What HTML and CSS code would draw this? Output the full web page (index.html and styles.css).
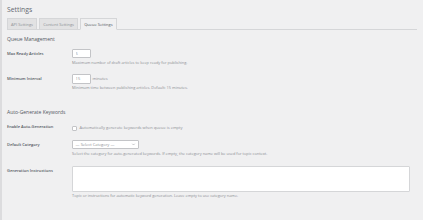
FILE: index.html
```html
<!DOCTYPE html>
<html>
<head>
<meta charset="utf-8">
<link rel="stylesheet" href="styles.css">
</head>
<body>
<div class="admin">
  <div class="wrap">
    <h1 class="title">Settings</h1>
    <nav class="tabs">
      <a class="tab">API Settings</a>
      <a class="tab">Content Settings</a>
      <a class="tab active">Queue Settings</a>
    </nav>

    <h2 class="section">Queue Management</h2>
    <div class="form">
      <div class="row">
        <div class="label">Max Ready Articles</div>
        <div class="field">
          <input class="num" type="text" value="5">
          <p class="desc">Maximum number of draft articles to keep ready for publishing.</p>
        </div>
      </div>
      <div class="row">
        <div class="label">Minimum Interval</div>
        <div class="field">
          <div class="inline"><input class="num" type="text" value="15"><span class="unit">minutes</span></div>
          <p class="desc">Minimum time between publishing articles. Default: 15 minutes.</p>
        </div>
      </div>
    </div>

    <h2 class="section gap">Auto-Generate Keywords</h2>
    <div class="form">
      <div class="row">
        <div class="label">Enable Auto-Generation</div>
        <div class="field">
          <label class="check"><span class="box"></span>Automatically generate keywords when queue is empty</label>
        </div>
      </div>
      <div class="row">
        <div class="label">Default Category</div>
        <div class="field">
          <div class="select"><span>— Select Category —</span><svg class="chev" viewBox="0 0 20 20"><path d="M5 7l5 5 5-5" fill="none" stroke="#8c8f94" stroke-width="2"/></svg></div>
          <p class="desc loose">Select the category for auto-generated keywords. If empty, the category name will be used for topic context.</p>
        </div>
      </div>
      <div class="row">
        <div class="label">Generation Instructions</div>
        <div class="field">
          <div class="textarea"></div>
          <p class="desc">Topic or instructions for automatic keyword generation. Leave empty to use category name.</p>
        </div>
      </div>
    </div>
  </div>
</div>
</body>
</html>
```
FILE: styles.css
```css
html, body {
  margin: 0;
  padding: 0;
  background: #f0f0f1;
}
body {
  height: 220px;
  overflow: hidden;
  font-family: "Open Sans", "Noto Sans", sans-serif;
  color: #646970;
  font-size: 4px;
  line-height: 1.4;
}
.admin {
  border-left: 2px solid #dcdcde;
  height: 100%;
  box-sizing: border-box;
  padding-left: 5px;
}
.wrap {
  margin: 0 6px 0 0;
  padding-top: 3px;
}
.title {
  font-size: 6.8px;
  font-weight: 400;
  color: #646970;
  margin: 0;
  padding: 2.8px 0 1.2px;
  line-height: 1.3;
}
.tabs {
  display: flex;
  border-bottom: 1px solid #d5d6d8;
  margin-top: 2.2px;
}
.tab {
  font-size: 4px;
  line-height: 7px;
  padding: 1.5px 3.1px;
  margin-left: 2px;
  margin-bottom: -1px;
  border: 1px solid #d5d6d8;
  background: #e2e2e3;
  color: #8c8f94;
}
.tab:first-child { margin-left: 0; }
.tab.active {
  background: #f0f0f1;
  border-bottom-color: #f0f0f1;
  color: #50575e;
}
.section {
  font-size: 5px;
  font-weight: 400;
  color: #50575e;
  margin: 5.5px 0 1.9px;
}
.section.gap { margin-top: 14.3px; }
.row {
  display: flex;
}
.label {
  flex: none;
  width: 62px;
  padding: 6.2px 3.1px 6.2px 0;
  font-size: 4px;
  font-weight: 600;
  color: #50575e;
  line-height: 1.3;
  box-sizing: border-box;
}
.field {
  flex: 1;
  padding: 4.65px 3.1px;
}
.num {
  display: block;
  width: 18.6px;
  height: 9.3px;
  box-sizing: border-box;
  border: 1px solid #c3c4c7;
  border-radius: 1px;
  padding: 0 2.5px;
  font: 4px "Open Sans", sans-serif;
  color: #8c8f94;
  background: #fff;
  margin: 0;
}
.inline { display: flex; align-items: center; }
.unit { font-size: 4px; margin-left: 1.9px; color: #8c8f94; }
.desc {
  margin: 1.25px 0 0;
  font-size: 3.9px;
  color: #8c8f94;
}
.desc.loose { margin-top: 2.2px; }
.check {
  display: flex;
  align-items: center;
  font-size: 4px;
  color: #8c8f94;
  padding-top: 2.5px;
}
.box {
  width: 5px;
  height: 5px;
  border: 1px solid #c3c4c7;
  border-radius: 1px;
  background: #fff;
  margin-right: 2.5px;
  box-sizing: border-box;
}
.select {
  width: 67px;
  height: 8.7px;
  box-sizing: border-box;
  border: 1px solid #c3c4c7;
  border-radius: 1px;
  background: #fff;
  display: flex;
  align-items: center;
  justify-content: space-between;
  padding: 0 2.5px;
  font-size: 4px;
  color: #8c8f94;
}
.chev { width: 5px; height: 5px; }
.textarea {
  width: 99%;
  height: 26px;
  box-sizing: border-box;
  border: 1px solid #d5d6d8;
  border-radius: 1px;
  background: #fff;
}
```
